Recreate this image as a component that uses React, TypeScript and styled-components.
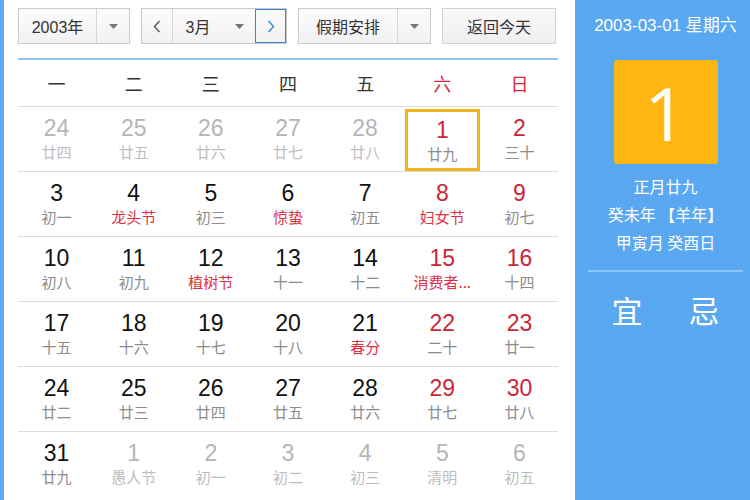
import styled, { createGlobalStyle } from "styled-components";

const GlobalStyle = createGlobalStyle`
  html, body { margin: 0; padding: 0; background: #fff; }
  body { font-family: "Liberation Sans", "Noto Sans CJK SC", sans-serif; }
`;

interface DayCell {
  day: number;
  lunar: string;
  other?: boolean;
  festival?: boolean;
  selected?: boolean;
}

const weekdays = ["一", "二", "三", "四", "五", "六", "日"];

const rows: DayCell[][] = [
  [
    { day: 24, lunar: "廿四", other: true },
    { day: 25, lunar: "廿五", other: true },
    { day: 26, lunar: "廿六", other: true },
    { day: 27, lunar: "廿七", other: true },
    { day: 28, lunar: "廿八", other: true },
    { day: 1, lunar: "廿九", selected: true },
    { day: 2, lunar: "三十" },
  ],
  [
    { day: 3, lunar: "初一" },
    { day: 4, lunar: "龙头节", festival: true },
    { day: 5, lunar: "初三" },
    { day: 6, lunar: "惊蛰", festival: true },
    { day: 7, lunar: "初五" },
    { day: 8, lunar: "妇女节", festival: true },
    { day: 9, lunar: "初七" },
  ],
  [
    { day: 10, lunar: "初八" },
    { day: 11, lunar: "初九" },
    { day: 12, lunar: "植树节", festival: true },
    { day: 13, lunar: "十一" },
    { day: 14, lunar: "十二" },
    { day: 15, lunar: "消费者...", festival: true },
    { day: 16, lunar: "十四" },
  ],
  [
    { day: 17, lunar: "十五" },
    { day: 18, lunar: "十六" },
    { day: 19, lunar: "十七" },
    { day: 20, lunar: "十八" },
    { day: 21, lunar: "春分", festival: true },
    { day: 22, lunar: "二十" },
    { day: 23, lunar: "廿一" },
  ],
  [
    { day: 24, lunar: "廿二" },
    { day: 25, lunar: "廿三" },
    { day: 26, lunar: "廿四" },
    { day: 27, lunar: "廿五" },
    { day: 28, lunar: "廿六" },
    { day: 29, lunar: "廿七" },
    { day: 30, lunar: "廿八" },
  ],
  [
    { day: 31, lunar: "廿九" },
    { day: 1, lunar: "愚人节", other: true },
    { day: 2, lunar: "初一", other: true },
    { day: 3, lunar: "初二", other: true },
    { day: 4, lunar: "初三", other: true },
    { day: 5, lunar: "清明", other: true },
    { day: 6, lunar: "初五", other: true },
  ],
];

function Caret() {
  return (
    <svg width="9" height="5" viewBox="0 0 9 5">
      <path d="M0 0 L9 0 L4.5 5 Z" fill="#777" />
    </svg>
  );
}

function Chevron({ dir, color }: { dir: "left" | "right"; color: string }) {
  return (
    <svg width="8" height="13" viewBox="0 0 8 13">
      <path
        d={dir === "left" ? "M6.5 1 L1.5 6.5 L6.5 12" : "M1.5 1 L6.5 6.5 L1.5 12"}
        stroke={color}
        strokeWidth="1.4"
        fill="none"
      />
    </svg>
  );
}

export default function App() {
  return (
    <>
      <GlobalStyle />
      <Page>
        <LeftStrip />
        <Main>
          <Toolbar>
            <Select $width={112}>
              <SelectLabel>2003年</SelectLabel>
              <CaretBox>
                <Caret />
              </CaretBox>
            </Select>
            <Select $width={146}>
              <NavButton>
                <Chevron dir="left" color="#555" />
              </NavButton>
              <SelectLabel>3月</SelectLabel>
              <CaretBox $plain>
                <Caret />
              </CaretBox>
              <NavButton $active>
                <Chevron dir="right" color="#3a86d6" />
              </NavButton>
            </Select>
            <Select $width={133}>
              <SelectLabel>假期安排</SelectLabel>
              <CaretBox>
                <Caret />
              </CaretBox>
            </Select>
            <TodayButton>返回今天</TodayButton>
          </Toolbar>
          <Grid>
            <WeekRow>
              {weekdays.map((w, i) => (
                <WeekCell key={w} $weekend={i >= 5}>
                  {w}
                </WeekCell>
              ))}
            </WeekRow>
            {rows.map((row, ri) => (
              <DayRow key={ri} $last={ri === rows.length - 1}>
                {row.map((c, ci) => (
                  <Cell key={ci} $selected={c.selected}>
                    <DayNum $other={c.other} $weekend={ci >= 5}>
                      {c.day}
                    </DayNum>
                    <Lunar $other={c.other} $festival={c.festival}>
                      {c.lunar}
                    </Lunar>
                  </Cell>
                ))}
              </DayRow>
            ))}
          </Grid>
        </Main>
        <Side>
          <SideDate>2003-03-01 星期六</SideDate>
          <BigDay>1</BigDay>
          <SideInfo>
            <div>正月廿九</div>
            <div>癸未年 【羊年】</div>
            <div>甲寅月 癸酉日</div>
          </SideInfo>
          <SideDivider />
          <YiJi>
            <span>宜</span>
            <span>忌</span>
          </YiJi>
        </Side>
      </Page>
    </>
  );
}

const Page = styled.div`
  width: 750px;
  height: 500px;
  display: flex;
  overflow: hidden;
  background: #fff;
`;

const LeftStrip = styled.div`
  width: 4px;
  background: #5ca8f2;
  flex-shrink: 0;
`;

const Main = styled.div`
  width: 571px;
  padding: 8px 17px 0 14px;
  box-sizing: border-box;
  flex-shrink: 0;
`;

const Toolbar = styled.div`
  display: flex;
  gap: 11px;
  height: 36px;
  align-items: stretch;
`;

const Select = styled.div<{ $width: number }>`
  width: ${(p) => p.$width}px;
  box-sizing: border-box;
  display: flex;
  align-items: stretch;
  border: 1px solid #c9c9c9;
  background: linear-gradient(#fdfdfd, #f1f1f1);
  font-family: "Noto Sans CJK SC", sans-serif;
  font-size: 16px;
  color: #333;
`;

const SelectLabel = styled.div`
  flex: 1;
  display: flex;
  align-items: center;
  justify-content: center;
  font-family: "Liberation Sans", "Noto Sans CJK SC", sans-serif;
`;

const CaretBox = styled.div<{ $plain?: boolean }>`
  width: 32px;
  display: flex;
  align-items: center;
  justify-content: center;
  border-left: ${(p) => (p.$plain ? "none" : "1px solid #d6d6d6")};
`;

const NavButton = styled.div<{ $active?: boolean }>`
  width: 30px;
  display: flex;
  align-items: center;
  justify-content: center;
  border-left: ${(p) => (p.$active ? "1px dotted #3a86d6" : "none")};
  border-right: ${(p) => (p.$active ? "none" : "1px solid #d6d6d6")};
  outline: ${(p) => (p.$active ? "1px solid #3a86d6" : "none")};
  outline-offset: -1px;
`;

const TodayButton = styled.div`
  width: 114px;
  box-sizing: border-box;
  border: 1px solid #d2d2d2;
  background: linear-gradient(#fafafa, #efefef);
  display: flex;
  align-items: center;
  justify-content: center;
  font-family: "Noto Sans CJK SC", sans-serif;
  font-size: 16px;
  color: #333;
`;

const Grid = styled.div`
  margin-top: 14px;
  border-top: 2px solid #8fc3ee;
`;

const WeekRow = styled.div`
  display: grid;
  grid-template-columns: repeat(7, 1fr);
  height: 46px;
  align-items: center;
  border-bottom: 1px solid #dcdcdc;
`;

const WeekCell = styled.div<{ $weekend?: boolean }>`
  text-align: center;
  font-family: "Noto Sans CJK SC", sans-serif;
  font-size: 18px;
  color: ${(p) => (p.$weekend ? "#d0283a" : "#333")};
`;

const DayRow = styled.div<{ $last?: boolean }>`
  display: grid;
  grid-template-columns: repeat(7, 1fr);
  height: 64px;
  border-bottom: ${(p) => (p.$last ? "none" : "1px solid #dcdcdc")};
`;

const Cell = styled.div<{ $selected?: boolean }>`
  display: flex;
  flex-direction: column;
  align-items: center;
  justify-content: center;
  gap: 1px;
  margin: ${(p) => (p.$selected ? "2px 1px 0 1px" : "0")};
  border: ${(p) => (p.$selected ? "3px solid #efb51f" : "none")};
  padding-bottom: ${(p) => (p.$selected ? "0" : "2px")};
`;

const DayNum = styled.div<{ $other?: boolean; $weekend?: boolean }>`
  font-family: "Liberation Sans", sans-serif;
  font-size: 23px;
  line-height: 26px;
  color: ${(p) => (p.$other ? "#b5b5b5" : p.$weekend ? "#cc2636" : "#111")};
`;

const Lunar = styled.div<{ $other?: boolean; $festival?: boolean }>`
  font-family: "Noto Sans CJK SC", sans-serif;
  font-size: 15px;
  line-height: 20px;
  color: ${(p) => (p.$other ? "#bdbdbd" : p.$festival ? "#e0303f" : "#8c8c8c")};
`;

const Side = styled.div`
  flex: 1;
  background: #5aa7f2;
  display: flex;
  flex-direction: column;
  align-items: center;
  color: #fff;
  font-family: "Noto Sans CJK SC", sans-serif;
  padding: 13px 7px 0 13px;
`;

const SideDate = styled.div`
  font-family: "Liberation Sans", "Noto Sans CJK SC", sans-serif;
  font-size: 17px;
  line-height: 26px;
`;

const BigDay = styled.div`
  margin-top: 21px;
  width: 104px;
  height: 104px;
  background: #ffb612;
  border-radius: 3px;
  display: flex;
  align-items: center;
  justify-content: center;
  font-family: "Open Sans", "Liberation Sans", sans-serif;
  font-size: 74px;
  font-weight: 400;
  color: #fff;
`;

const SideInfo = styled.div`
  margin-top: 8px;
  text-align: center;
  font-size: 16px;
  line-height: 28px;
`;

const SideDivider = styled.div`
  margin-top: 14px;
  align-self: stretch;
  height: 2px;
  background: #8ec5f7;
`;

const YiJi = styled.div`
  margin-top: 18px;
  display: flex;
  gap: 46px;
  font-size: 31px;
  line-height: 40px;
`;
